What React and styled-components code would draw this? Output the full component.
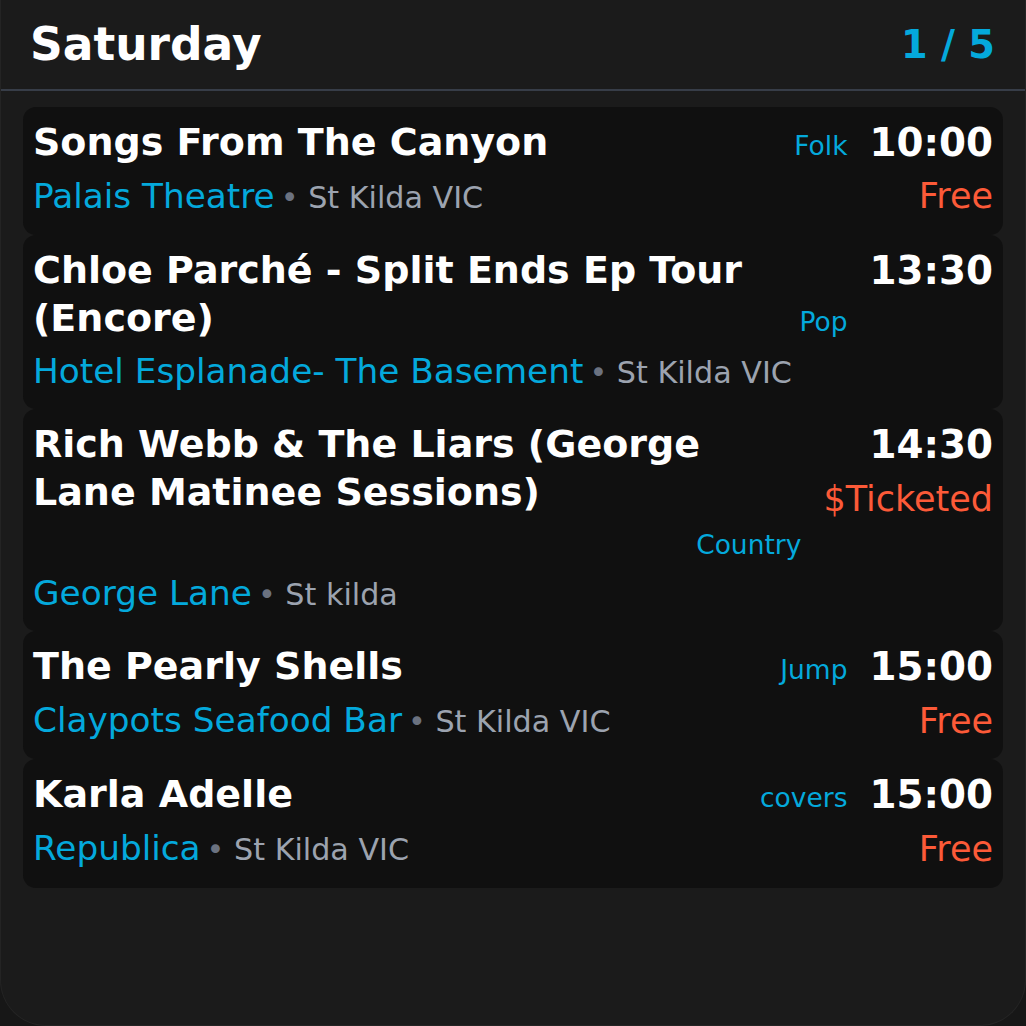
import styled, { createGlobalStyle } from "styled-components";

const events = [
  {
    title: "Songs From The Canyon",
    genre: "Folk",
    time: "10:00",
    venue: "Palais Theatre",
    place: "St Kilda VIC",
    price: "Free",
  },
  {
    title: "Chloe Parché - Split Ends Ep Tour (Encore)",
    genre: "Pop",
    time: "13:30",
    venue: "Hotel Esplanade- The Basement",
    place: "St Kilda VIC",
  },
  {
    title: "Rich Webb & The Liars (George Lane Matinee Sessions)",
    genre: "Country",
    time: "14:30",
    venue: "George Lane",
    place: "St kilda",
    price: "$Ticketed",
  },
  {
    title: "The Pearly Shells",
    genre: "Jump",
    time: "15:00",
    venue: "Claypots Seafood Bar",
    place: "St Kilda VIC",
    price: "Free",
  },
  {
    title: "Karla Adelle",
    genre: "covers",
    time: "15:00",
    venue: "Republica",
    place: "St Kilda VIC",
    price: "Free",
  },
];

const GlobalStyle = createGlobalStyle`
  html, body {
    margin: 0;
    padding: 0;
    background: #171717;
  }
  body {
    font-family: "DejaVu Sans", "Liberation Sans", sans-serif;
    color: #fff;
  }
`;

const EventCard = ({ event }) => {
  return (
    <Card>
      <Main>
        <TitleRow>
          <Title>{event.title}</Title>
          <Genre>{event.genre}</Genre>
        </TitleRow>
        <Where>
          <Venue>{event.venue}</Venue>
          <Place>
            <Dot>•</Dot> {event.place}
          </Place>
        </Where>
      </Main>
      <Side>
        <Time>{event.time}</Time>
        {event.price && <Price>{event.price}</Price>}
      </Side>
    </Card>
  );
};

const App = () => {
  return (
    <>
      <GlobalStyle />
      <Screen>
        <Header>
          <Day>Saturday</Day>
          <Pager>1 / 5</Pager>
        </Header>
        <List>
          {events.map((event, i) => (
            <EventCard key={i} event={event} />
          ))}
        </List>
      </Screen>
    </>
  );
};

const Screen = styled.div`
  box-sizing: border-box;
  width: 1026px;
  height: 1026px;
  background: #1b1b1b;
  border-radius: 0 0 46px 46px;
  border: 1px solid #242424;
  border-top: none;
  overflow: hidden;
`;

const Header = styled.header`
  height: 89px;
  display: flex;
  align-items: center;
  justify-content: space-between;
  padding: 0 30px 0 29px;
  border-bottom: 2px solid #373d48;
`;

const Day = styled.h1`
  margin: 0;
  font-size: 45.5px;
  font-weight: 700;
  color: #fff;
`;

const Pager = styled.span`
  font-size: 38.3px;
  font-weight: 700;
  color: #04a9dc;
`;

const List = styled.div`
  margin: 16px 22px 0;
  display: flex;
  flex-direction: column;
`;

const Card = styled.div`
  display: flex;
  gap: 22px;
  padding: 12px 10px 16px;
  background: #101010;
  border-radius: 13px;
`;

const Main = styled.div`
  flex: 1;
  min-width: 0;
  display: flex;
  flex-direction: column;
  gap: 8px;
`;

const TitleRow = styled.div`
  display: flex;
  flex-wrap: wrap;
  align-items: last baseline;
  column-gap: 16px;
  row-gap: 12px;
`;

const Title = styled.div`
  flex: 1 1 680px;
  font-size: 38px;
  line-height: 1.25;
  font-weight: 700;
  color: #fff;
`;

const Genre = styled.span`
  margin-left: auto;
  margin-bottom: 3px;
  font-size: 26.5px;
  line-height: 1.25;
  color: #04a9dc;
`;

const Where = styled.div`
  line-height: 1.25;
`;

const Venue = styled.span`
  font-size: 34.3px;
  color: #04a9dc;
`;

const Place = styled.span`
  font-size: 30.2px;
  color: #9ca3af;
  margin-left: 6px;
`;

const Dot = styled.span`
  color: #6b7280;
`;

const Side = styled.div`
  display: flex;
  flex-direction: column;
  align-items: flex-end;
  gap: 8px;
`;

const Time = styled.div`
  font-size: 38.8px;
  line-height: 1.25;
  font-weight: 700;
  color: #fff;
`;

const Price = styled.div`
  font-size: 35px;
  line-height: 1.25;
  color: #fc5a38;
`;

export default App;
